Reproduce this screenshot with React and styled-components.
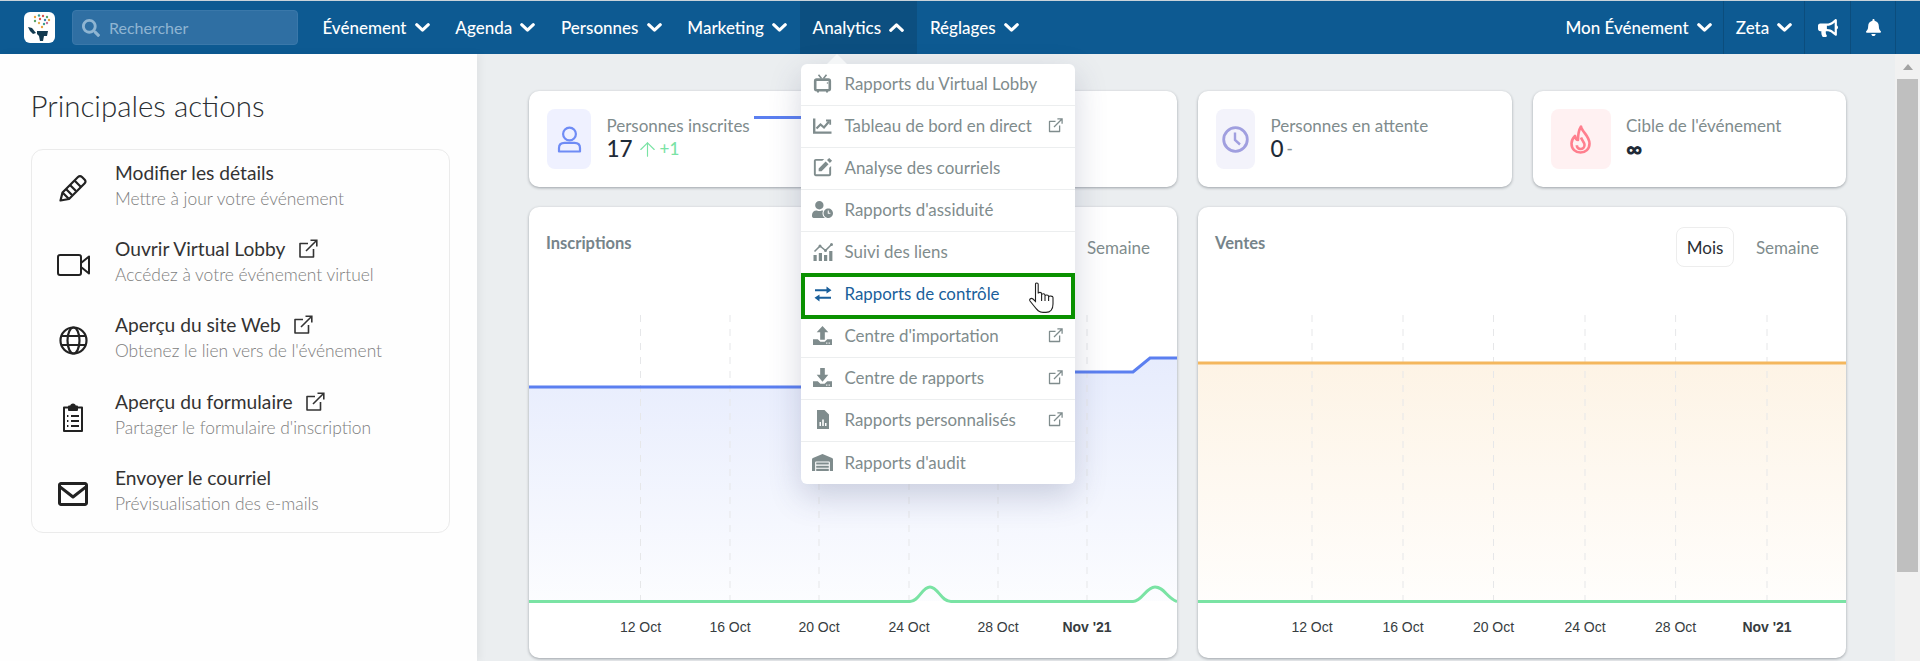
import React from "react";
import styled, { createGlobalStyle } from "styled-components";
import { BiEnvelope, BiSolidEdit } from "react-icons/bi";
import { FaBell, FaBullhorn, FaSearch, FaUserClock, FaWarehouse } from "react-icons/fa";
import { LuArrowUp } from "react-icons/lu";

const Global = createGlobalStyle`
  html, body { margin: 0; padding: 0; height: 661px; overflow: hidden; background: #fff; }
  body { font-family: "Lato", "Noto Sans", sans-serif; }
  *, *::before, *::after { box-sizing: border-box; }
`;

const Page = styled.div`
  position: relative;
  width: 1920px;
  height: 661px;
  overflow: hidden;
  display: flex;
  flex-direction: column;
  border-top: 1px solid #c9d3da;
`;

const Navbar = styled.header`
  height: 53px;
  flex: none;
  background: #0d5a92;
  display: flex;
  align-items: stretch;
  padding-left: 24px;
  color: #fff;
`;

const LogoBox = styled.div`
  width: 31px;
  height: 31px;
  margin-top: 11px;
  background: #fff;
  border-radius: 6px;
  flex: none;
  display: flex;
`;

const Search = styled.div`
  width: 226px;
  height: 35px;
  margin: 9px 11.5px 0 17px;
  border-radius: 4px;
  background: #2f6fa3;
  border: 1px solid #3a78aa;
  display: flex;
  align-items: center;
  padding-left: 9px;
  gap: 9px;
  color: #8fb5d2;
  font-size: 16px;
  flex: none;
`;

const NavItem = styled.div`
  display: flex;
  align-items: center;
  gap: 8px;
  padding: 0 12.9px;
  font-size: 17px;
  font-weight: 500;
  background: ${(p) => (p.$active ? "#0c4f80" : "transparent")};
  white-space: nowrap;
`;

const NavRight = styled.div`
  margin-left: auto;
  display: flex;
  align-items: stretch;
  padding-right: 24px;
`;

const NavCell = styled.div`
  display: flex;
  align-items: center;
  justify-content: center;
  gap: 8px;
  width: ${(p) => p.$w}px;
  border-right: 1px solid rgba(0, 0, 0, 0.14);
  font-size: 17px;
  font-weight: 500;
  white-space: nowrap;
`;

const Body = styled.div`
  flex: 1;
  display: flex;
  min-height: 0;
`;

const Side = styled.aside`
  width: 477px;
  flex: none;
  background: #fefefe;
  padding: 33px 27.5px 0 30.5px;
  box-shadow: 3px 0 8px rgba(0, 0, 0, 0.05);
  position: relative;
`;

const SideTitle = styled.h1`
  margin: 0 0 24px;
  font-size: 29.5px;
  line-height: 38px;
  font-weight: 300;
  color: #2b2f33;
`;

const ActionCard = styled.div`
  border: 1px solid #ebebeb;
  border-radius: 12px;
  height: 384px;
`;

const ActionRow = styled.div`
  height: 76.4px;
  display: flex;
  align-items: flex-start;
`;

const ActionIcon = styled.div`
  width: 83.5px;
  height: 76.4px;
  flex: none;
  display: flex;
  align-items: center;
  justify-content: center;
  color: #222;
`;

const ActionText = styled.div`
  padding-top: 9.5px;
`;

const ActionTitle = styled.div`
  display: flex;
  align-items: center;
  gap: 12px;
  font-size: 19.2px;
  line-height: 26px;
  color: #333;
`;

const ActionSub = styled.div`
  font-size: 17.4px;
  font-weight: 300;
  line-height: 26px;
  color: #7d7d7d;
`;

const Main = styled.main`
  flex: 1;
  background: #ebeef0;
  padding: 37px 49px 0 52px;
  min-width: 0;
`;

const KpiGrid = styled.div`
  display: grid;
  grid-template-columns: repeat(4, 1fr);
  gap: 21px;
`;

const KpiCard = styled.section`
  position: relative;
  height: 96px;
  background: #fff;
  border-radius: 10px;
  box-shadow: 0 1px 3px rgba(40, 50, 60, 0.4);
  display: flex;
  align-items: center;
  padding-left: ${(p) => p.$pad}px;
  gap: 15.5px;
`;

const KpiIcon = styled.div`
  width: ${(p) => p.$w}px;
  height: 60px;
  border-radius: 8px;
  flex: none;
  background: ${(p) => p.$bg};
  color: ${(p) => p.$fg};
  display: flex;
  align-items: center;
  justify-content: center;
`;

const KpiCopy = styled.div`
  padding-bottom: 3px;
`;

const KpiLabel = styled.div`
  font-size: 17px;
  line-height: 23px;
  color: #7f8c8d;
`;

const KpiValue = styled.div`
  display: flex;
  align-items: center;
  font-size: 22.5px;
  line-height: 24px;
  font-weight: ${(p) => (p.$bold ? 800 : 500)};
  color: #1f2b38;
  gap: 3px;
`;

const KpiDelta = styled.span`
  display: flex;
  align-items: center;
  gap: 1px;
  font-size: 17px;
  font-weight: 500;
  color: ${(p) => p.$c};
`;

const Sparkline = styled.span`
  position: absolute;
  left: 225px;
  top: 25px;
  width: 60px;
  height: 2.5px;
  background: #5b7ff0;
`;

const ChartGrid = styled.div`
  margin-top: 20px;
  display: grid;
  grid-template-columns: repeat(2, 1fr);
  gap: 21px;
`;

const ChartCard = styled.section`
  height: 451px;
  background: #fff;
  border-radius: 10px;
  box-shadow: 0 1px 3px rgba(40, 50, 60, 0.4);
  overflow: hidden;
  display: flex;
  flex-direction: column;
`;

const ChartHead = styled.div`
  height: 73px;
  flex: none;
  display: flex;
  justify-content: space-between;
  align-items: flex-start;
  padding: 20px 16px 0 17px;
`;

const ChartTitle = styled.h2`
  margin: 4px 0 0;
  font-size: 16.5px;
  line-height: 24px;
  font-weight: 700;
  color: #76848a;
`;

const Toggle = styled.div`
  display: flex;
  font-size: 17px;
`;

const ToggleOption = styled.div`
  height: 40px;
  display: flex;
  align-items: center;
  padding: 0 ${(p) => (p.$on ? 9.5 : 10)}px;
  margin-left: ${(p) => (p.$on ? 0 : 11)}px;
  border-radius: 8px;
  border: 1px solid ${(p) => (p.$on ? "#ededed" : "transparent")};
  color: ${(p) => (p.$on ? "#2b2f33" : "#7f8c8d")};
`;

const PlotSvg = styled.svg`
  display: block;
  width: 648px;
  height: 371px;
  flex: none;
`;

const AxisText = styled.text`
  font-family: "Liberation Sans", Arial, sans-serif;
  font-size: 14px;
  font-weight: ${(p) => (p.$bold ? 700 : 400)};
  fill: #373d3f;
  text-anchor: middle;
`;

const Scrollbar = styled.div`
  width: 25px;
  flex: none;
  background: #f1f1f1;
  display: flex;
  flex-direction: column;
  align-items: center;
  padding-top: 10px;
`;

const ScrollArrow = styled.div`
  width: 0;
  height: 0;
  border-left: 5.5px solid transparent;
  border-right: 5.5px solid transparent;
  border-bottom: 6px solid #a3a3a3;
`;

const ScrollThumb = styled.div`
  width: 21px;
  height: 493px;
  margin-top: 9px;
  background: #bfbfbf;
`;

const Menu = styled.nav`
  position: absolute;
  left: 801px;
  top: 63px;
  width: 274px;
  background: #fff;
  border-radius: 6px;
  box-shadow: 0 12px 32px rgba(60, 70, 110, 0.22);
  &::before {
    content: "";
    position: absolute;
    left: 26px;
    top: -10px;
    border-left: 10px solid transparent;
    border-right: 10px solid transparent;
    border-bottom: 10px solid #f4f6f7;
  }
`;

const MenuRow = styled.div`
  position: relative;
  height: 42px;
  display: flex;
  align-items: center;
  padding-bottom: 2px;
  border-bottom: ${(p) => (p.$last ? "none" : "1px solid #eceeef")};
  color: ${(p) => (p.$active ? "#1a5f9b" : "#7f8c8d")};
  font-size: 16.9px;
  &::after {
    content: ${(p) => (p.$active ? '""' : "none")};
    position: absolute;
    left: 0;
    right: 0;
    top: -1px;
    height: 46px;
    border: 4px solid #0a9100;
    pointer-events: none;
  }
`;

const MenuIcon = styled.span`
  width: 43.5px;
  flex: none;
  display: flex;
  justify-content: center;
`;

const MenuExt = styled.span`
  margin-left: auto;
  margin-right: 12px;
  display: flex;
  color: #7f8c8d;
`;

const Cursor = styled.svg`
  position: absolute;
  left: 1029px;
  top: 281px;
`;

const Chevron = ({ up }) => (
  <svg width="15" height="9" viewBox="0 0 15 9" fill="none">
    <path d={up ? "M1.7 7.3 L7.5 1.9 L13.3 7.3" : "M1.7 1.7 L7.5 7.1 L13.3 1.7"} stroke="#fff" strokeWidth="3.1" strokeLinecap="round" strokeLinejoin="round" />
  </svg>
);

const Logo = () => (
  <svg width="31" height="31" viewBox="0 0 31 31">
    {[["#e8a13c",11,5],["#3c9c8f",15,3.5],["#d9534f",19,4],["#5aa469",23,5],["#e8a13c",25,8],["#3c7fb1",21,8],["#d9534f",16,7],["#5aa469",11,9],["#e0b04f",15,11],["#3c9c8f",20,12],["#c96f9a",23,11],["#e8a13c",18,15]].map(([c,x,y],i) => (
      <circle key={i} cx={x} cy={y} r="1.2" fill={c} />
    ))}
    <path d="M4 15 L8 16 L12 21 L9 22 L6 19 Z" fill="#123a50" />
    <path d="M13 19 H24 L23 24 H20 L19 29 H16 L15 24 L13 22 Z" fill="#123a50" />
  </svg>
);

const ExtIcon = ({ size = 20, stroke = 1.6 }) => (
  <svg width={size} height={size} viewBox="0 0 20 20" fill="none" stroke="currentColor" strokeWidth={stroke}>
    <path d="M10 4.5 H2 V18 H15.5 V10" strokeLinejoin="round" />
    <path d="M8 12 L18.3 1.7 M12.5 1.2 H18.8 V7.5" />
  </svg>
);

const PencilIcon = () => (
  <svg width="30" height="30" viewBox="0 0 30 30" fill="none" stroke="currentColor" strokeWidth="2.2" strokeLinejoin="round">
    <path d="M2.5 27.5 L4.5 19.5 L20 4 Q22 2 24 4 L26.5 6.5 Q28.5 8.5 26.5 10.5 L11 26 Z" />
    <path d="M4.5 19.5 L10.5 25.5 M16.5 7.5 L23 14 M8 16 L14 22 M12 12 L18 18" />
  </svg>
);

const VideoIcon = () => (
  <svg width="33" height="22" viewBox="0 0 33 22" fill="none" stroke="currentColor" strokeWidth="2" strokeLinejoin="round">
    <rect x="1" y="1" width="23" height="20" rx="2" />
    <path d="M24 9 L32 2.5 V19.5 L24 13 Z" />
  </svg>
);

const GlobeIcon = () => (
  <svg width="29" height="29" viewBox="0 0 29 29" fill="none" stroke="currentColor" strokeWidth="2.2">
    <circle cx="14.5" cy="14.5" r="13" />
    <ellipse cx="14.5" cy="14.5" rx="6" ry="13" />
    <path d="M2 10 H27 M2 19 H27" />
  </svg>
);

const ClipIcon = () => (
  <svg width="22" height="29" viewBox="0 0 22 29" fill="none" stroke="currentColor" strokeWidth="2" strokeLinejoin="round">
    <path d="M6 4.5 H2 V28 H20 V4.5 H16" />
    <path d="M7 7 V3.5 H9 C9.5 0.8 12.5 0.8 13 3.5 H15 V7 Z" fill="currentColor" />
    <path d="M9 13 H17 M9 18 H17 M9 23 H17" />
    <path d="M5 13 H6.4 M5 18 H6.4 M5 23 H6.4" />
  </svg>
);

const TvIcon = () => (
  <svg width="19" height="19" viewBox="0 0 19 19" fill="none" stroke="currentColor">
    <rect x="2.2" y="5.6" width="14.6" height="10.6" rx="1.4" strokeWidth="2.6" />
    <path d="M5.5 0.8 L8.5 4.5 M13.5 0.8 L10.5 4.5" strokeWidth="1.6" />
    <path d="M4 17.6 H6 M13 17.6 H15" strokeWidth="1.6" />
    <circle cx="14.5" cy="9" r="0.8" fill="currentColor" stroke="none" />
  </svg>
);

const TrendIcon = () => (
  <svg width="19" height="16" viewBox="0 0 19 16" fill="none" stroke="currentColor">
    <path d="M1.2 0.5 V14.6 H18.5" strokeWidth="2.4" />
    <path d="M3.5 10.5 L7.5 6.5 L11 9.5 L16 3.5" strokeWidth="2.2" />
    <path d="M13 2.5 H17.2 V6.8" strokeWidth="1.8" />
  </svg>
);

const LinksIcon = () => (
  <svg width="20" height="18" viewBox="0 0 20 18" fill="currentColor">
    <rect x="0.5" y="12" width="3.2" height="6" />
    <rect x="5.8" y="10" width="3.2" height="8" />
    <rect x="11" y="12" width="3.2" height="6" />
    <rect x="16.2" y="8" width="3.2" height="10" />
    <path d="M1.5 8.5 L7 3 L12.5 7.5 L18.5 1.5" fill="none" stroke="currentColor" strokeWidth="1.6" />
    <circle cx="7" cy="3" r="1.5" />
    <circle cx="12.5" cy="7.5" r="1.5" />
    <circle cx="18.5" cy="1.5" r="1.5" />
  </svg>
);

const TransferIcon = () => (
  <svg width="18" height="16" viewBox="0 0 18 16" fill="currentColor">
    <path d="M12.5 0.5 L17.5 4.2 L12.5 7.4 V5.2 H1 V3.2 H12.5 Z" />
    <path d="M5.5 8.6 V10.8 H17 V12.8 H5.5 V15.4 L0.5 11.8 Z" />
  </svg>
);

const TrayIcon = ({ up }) => (
  <svg width="19" height="19" viewBox="0 0 18 18" fill="currentColor">
    <path d={up ? "M9 0 L14.5 6 H11.2 V13 H6.8 V6 H3.5 Z" : "M6.8 0 H11.2 V6.5 H14.5 L9 13 L3.5 6.5 H6.8 Z"} />
    <path fillRule="evenodd" d="M0 12.5 H4.5 L7 15 H11 L13.5 12.5 H18 V18 H0 Z M12.5 15.6 H13.6 V16.7 H12.5 Z M14.8 15.6 H15.9 V16.7 H14.8 Z" />
  </svg>
);

const ReportIcon = () => (
  <svg width="14" height="19" viewBox="0 0 14 19" fill="currentColor">
    <path fillRule="evenodd" d="M1 0 H8.5 L13 4.5 V19 H1 Z M3.5 16 H5 V12 H3.5 Z M6.2 16 H7.8 V9.5 H6.2 Z M9 16 H10.5 V13 H9 Z" />
  </svg>
);

const UserIcon = () => (
  <svg width="25" height="27" viewBox="0 0 25 27" fill="none" stroke="currentColor" strokeWidth="2.2">
    <circle cx="12.5" cy="8" r="6.4" />
    <path d="M2 25.5 V22 C2 18.5 4.5 16.8 7.5 16.8 H17.5 C20.5 16.8 23 18.5 23 22 V25.5 Z" strokeLinejoin="round" />
  </svg>
);

const ClockIcon = () => (
  <svg width="27" height="27" viewBox="0 0 27 27" fill="none" stroke="currentColor" strokeWidth="2.8">
    <circle cx="13.5" cy="13.5" r="11.8" />
    <path d="M13 6.5 V14 L18 18.5" strokeWidth="2.4" />
  </svg>
);

const FlameIcon = () => (
  <svg width="21" height="29" viewBox="0 0 21 29" fill="none" stroke="currentColor" strokeWidth="2.6" strokeLinejoin="round">
    <path d="M11 1.5 C12 7 19.5 11 19.5 18.5 C19.5 24 15.5 27.5 10.5 27.5 C5.5 27.5 1.5 24 1.5 18.5 C1.5 15 3 13 5 11 C5.5 14 7 15 8 15 C8 10 8.5 5.5 11 1.5 Z" />
    <path d="M11 12.5 C12 15.5 14.5 17 14.5 20 C14.5 22.5 12.5 24 10.5 24 C8.5 24 6.8 22.5 6.8 20.3" />
  </svg>
);

const menuItems = [
  { label: "Rapports du Virtual Lobby", icon: <TvIcon /> },
  { label: "Tableau de bord en direct", icon: <TrendIcon />, ext: true },
  { label: "Analyse des courriels", icon: <BiSolidEdit size={23} /> },
  { label: "Rapports d'assiduité", icon: <FaUserClock size={21} /> },
  { label: "Suivi des liens", icon: <LinksIcon /> },
  { label: "Rapports de contrôle", icon: <TransferIcon />, active: true },
  { label: "Centre d'importation", icon: <TrayIcon up />, ext: true },
  { label: "Centre de rapports", icon: <TrayIcon />, ext: true },
  { label: "Rapports personnalisés", icon: <ReportIcon />, ext: true },
  { label: "Rapports d'audit", icon: <FaWarehouse size={21} /> },
];

const actions = [
  { title: "Modifier les détails", sub: "Mettre à jour votre événement", icon: <PencilIcon /> },
  { title: "Ouvrir Virtual Lobby", sub: "Accédez à votre événement virtuel", icon: <VideoIcon />, ext: true },
  { title: "Aperçu du site Web", sub: "Obtenez le lien vers de l'événement", icon: <GlobeIcon />, ext: true },
  { title: "Aperçu du formulaire", sub: "Partager le formulaire d'inscription", icon: <ClipIcon />, ext: true },
  { title: "Envoyer le courriel", sub: "Prévisualisation des e-mails", icon: <BiEnvelope size={36} /> },
];

const Area = ({ id, color, top }) => (
  <defs>
    <linearGradient id={id} x1="0" y1="0" x2="0" y2="1">
      <stop offset="0" stopColor={color} stopOpacity={top} />
      <stop offset="1" stopColor={color} stopOpacity="0.02" />
    </linearGradient>
  </defs>
);

const ticks = ["12 Oct", "16 Oct", "20 Oct", "24 Oct", "28 Oct", "Nov '21"];

const Plot = ({ id, xs, line, fill, color, fillColor, topOp, green }) => (
  <PlotSvg viewBox="0 0 648 371">
    <Area id={id} color={fillColor} top={topOp} />
    <path d={fill} fill={`url(#${id})`} />
    {xs.map((x) => (
      <line key={x} x1={x} x2={x} y1="35" y2="320" stroke="#e6e7e9" strokeDasharray="7 7" />
    ))}
    <path d={line} fill="none" stroke={color} strokeWidth="3" />
    <path d={green} fill="none" stroke="#7ae3a4" strokeWidth="3" />
    {xs.map((x, i) => (
      <AxisText key={x} x={x} y="352" $bold={i === 5}>{ticks[i]}</AxisText>
    ))}
  </PlotSvg>
);

const ChartPanel = ({ title, ...plot }) => (
  <ChartCard>
    <ChartHead>
      <ChartTitle>{title}</ChartTitle>
      <Toggle>
        <ToggleOption $on>Mois</ToggleOption>
        <ToggleOption>Semaine</ToggleOption>
      </Toggle>
    </ChartHead>
    <Plot {...plot} />
  </ChartCard>
);

export default function App() {
  return (
    <Page>
      <Global />
      <Navbar>
        <LogoBox><Logo /></LogoBox>
        <Search>
          <FaSearch size={18} color="#8fb5d2" />
          Rechercher
        </Search>
        {["Événement", "Agenda", "Personnes", "Marketing"].map((n) => (
          <NavItem key={n}>{n}<Chevron /></NavItem>
        ))}
        <NavItem $active>Analytics<Chevron up /></NavItem>
        <NavItem>Réglages<Chevron /></NavItem>
        <NavRight>
          <NavCell $w={170}>Mon Événement<Chevron /></NavCell>
          <NavCell $w={81}>Zeta<Chevron /></NavCell>
          <NavCell $w={46}><FaBullhorn size={20} /></NavCell>
          <NavCell $w={45}><FaBell size={17} /></NavCell>
        </NavRight>
      </Navbar>
      <Body>
        <Side>
          <SideTitle>Principales actions</SideTitle>
          <ActionCard>
            {actions.map((a) => (
              <ActionRow key={a.title}>
                <ActionIcon>{a.icon}</ActionIcon>
                <ActionText>
                  <ActionTitle>{a.title}{a.ext && <ExtIcon />}</ActionTitle>
                  <ActionSub>{a.sub}</ActionSub>
                </ActionText>
              </ActionRow>
            ))}
          </ActionCard>
        </Side>
        <Main>
          <KpiGrid>
            <KpiCard $pad={18}>
              <KpiIcon $w={44} $bg="#eff1ff" $fg="#6f8cf5"><UserIcon /></KpiIcon>
              <KpiCopy>
                <KpiLabel>Personnes inscrites</KpiLabel>
                <KpiValue>17 <KpiDelta $c="#7ae3a4"><LuArrowUp size={23} strokeWidth={1.2} />+1</KpiDelta></KpiValue>
              </KpiCopy>
              <Sparkline />
            </KpiCard>
            <KpiCard $pad={18} />
            <KpiCard $pad={18}>
              <KpiIcon $w={39} $bg="#f3f3fb" $fg="#a09fdf"><ClockIcon /></KpiIcon>
              <KpiCopy>
                <KpiLabel>Personnes en attente</KpiLabel>
                <KpiValue>0 <KpiDelta $c="#8a9499">-</KpiDelta></KpiValue>
              </KpiCopy>
            </KpiCard>
            <KpiCard $pad={18}>
              <KpiIcon $w={60} $bg="#fff1f2" $fg="#ff7f8e"><FlameIcon /></KpiIcon>
              <KpiCopy>
                <KpiLabel>Cible de l'événement</KpiLabel>
                <KpiValue $bold>∞</KpiValue>
              </KpiCopy>
            </KpiCard>
          </KpiGrid>
          <ChartGrid>
            <ChartPanel
              title="Inscriptions"
              id="blueFill"
              xs={[111.5, 201, 290, 380, 469, 558]}
              color="#5b7ff0"
              fillColor="#5b7ff0"
              topOp={0.15}
              line="M0 107 H420 L436 92 H604 L621 78 H648"
              fill="M0 107 H420 L436 92 H604 L621 78 H648 V321 H0 Z"
              green="M0 321.5 H381 C390 321.5 393 307 401 307 C409 307 412 321.5 422 321.5 H604 C613 321.5 617 307 626 307 C635 307 638 318 648 321.5"
            />
            <ChartPanel
              title="Ventes"
              id="orangeFill"
              xs={[114, 205, 295.5, 387, 477.6, 569]}
              color="#f4b75e"
              fillColor="#f4b75e"
              topOp={0.16}
              line="M0 83 H648"
              fill="M0 83 H648 V321 H0 Z"
              green="M0 321.5 H648"
            />
          </ChartGrid>
        </Main>
        <Scrollbar>
          <ScrollArrow />
          <ScrollThumb />
        </Scrollbar>
      </Body>
      <Menu>
        {menuItems.map((m, i) => (
          <MenuRow key={m.label} $active={m.active} $last={i === menuItems.length - 1}>
            <MenuIcon>{m.icon}</MenuIcon>
            {m.label}
            {m.ext && <MenuExt><ExtIcon size={15} stroke={1.7} /></MenuExt>}
          </MenuRow>
        ))}
      </Menu>
      <Cursor width="25" height="31" viewBox="0 0 25 31" fill="#fff" stroke="#222" strokeWidth="1.1">
        <path d="M6.5 2.2 C6.5 0.6 9.2 0.6 9.2 2.2 V11.5 C9.2 10 12.6 10 12.6 11.8 V13 C12.6 11.4 16 11.4 16 13.2 V14 C16 12.6 19.6 12.6 19.6 14.4 V15 C20 13.6 24 13.8 24 15.5 V22 C24 27 21.5 30.4 17 30.4 H14 C10 30.4 8 28 5 24 L1 19 C0 17.4 2 15.4 4 17 L6.5 19.5 Z" />
        <path d="M12.6 13 V19 M16 14 V19 M19.6 15 V19" fill="none" />
      </Cursor>
    </Page>
  );
}
